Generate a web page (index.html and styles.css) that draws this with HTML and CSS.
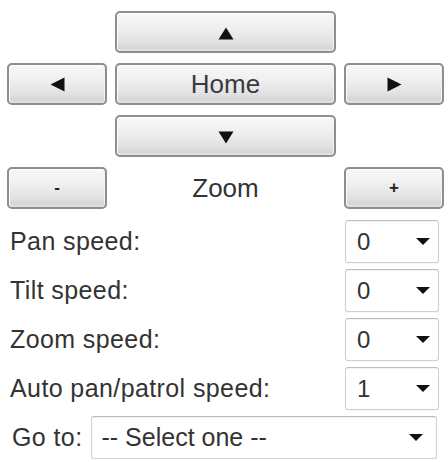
FILE: index.html
```html
<!DOCTYPE html>
<html lang="en">
<head>
<meta charset="utf-8">
<title>PTZ control</title>
<link rel="stylesheet" href="styles.css">
</head>
<body>
<div class="ptz">
  <div class="pad">
    <button class="btn up" type="button" aria-label="Up">
      <svg class="tri" width="16" height="13" viewBox="0 0 16 13"><path d="M8 0.5 L15.5 12.5 L0.5 12.5 Z"/></svg>
    </button>
    <button class="btn left" type="button" aria-label="Left">
      <svg class="tri" width="15" height="15" viewBox="0 0 15 15"><path d="M0.5 7.5 L14.5 0.5 L14.5 14.5 Z"/></svg>
    </button>
    <button class="btn home" type="button">Home</button>
    <button class="btn right" type="button" aria-label="Right">
      <svg class="tri" width="15" height="15" viewBox="0 0 15 15"><path d="M14.5 7.5 L0.5 0.5 L0.5 14.5 Z"/></svg>
    </button>
    <button class="btn down" type="button" aria-label="Down">
      <svg class="tri" width="16" height="13" viewBox="0 0 16 13"><path d="M8 12.5 L15.5 0.5 L0.5 0.5 Z"/></svg>
    </button>
    <button class="btn small minus" type="button">-</button>
    <span class="zoom-label">Zoom</span>
    <button class="btn small plus" type="button">+</button>
  </div>

  <div class="settings">
    <div class="row">
      <span class="label">Pan speed:</span>
      <div class="select short"><span class="value">0</span><svg class="caret" width="14" height="7" viewBox="0 0 14 7"><path d="M0 0 H14 L7 7 Z"/></svg></div>
    </div>
    <div class="row">
      <span class="label">Tilt speed:</span>
      <div class="select short"><span class="value">0</span><svg class="caret" width="14" height="7" viewBox="0 0 14 7"><path d="M0 0 H14 L7 7 Z"/></svg></div>
    </div>
    <div class="row">
      <span class="label">Zoom speed:</span>
      <div class="select short"><span class="value">0</span><svg class="caret" width="14" height="7" viewBox="0 0 14 7"><path d="M0 0 H14 L7 7 Z"/></svg></div>
    </div>
    <div class="row">
      <span class="label">Auto pan/patrol speed:</span>
      <div class="select short"><span class="value">1</span><svg class="caret" width="14" height="7" viewBox="0 0 14 7"><path d="M0 0 H14 L7 7 Z"/></svg></div>
    </div>
    <div class="row goto">
      <span class="label">Go to:</span>
      <div class="select wide"><span class="value">-- Select one --</span><svg class="caret" width="14" height="7" viewBox="0 0 14 7"><path d="M0 0 H14 L7 7 Z"/></svg></div>
    </div>
  </div>
</div>
</body>
</html>
```
FILE: styles.css
```css
html, body {
  margin: 0;
  padding: 0;
  background: #ffffff;
}

body {
  font-family: "Liberation Sans", Arial, sans-serif;
  color: #333333;
}

.ptz {
  width: 436px;
  padding: 11px 0 0 7px;
}

/* direction pad + zoom buttons */
.pad {
  display: grid;
  grid-template-columns: 100px 221px 100px;
  grid-auto-rows: 42px;
  column-gap: 8px;
  row-gap: 10px;
}

.btn {
  display: flex;
  align-items: center;
  justify-content: center;
  margin: 0;
  padding: 0;
  border: 2px solid #8e8e8e;
  border-radius: 5px;
  background: linear-gradient(#f8f8f8 0%, #efefef 40%, #e2e2e2 75%, #d6d6d6 92%, #e4e4e4 100%);
  box-shadow: inset 0 1px 0 #ffffff, inset 1px 0 0 #fbfbfb, inset -1px 0 0 #f2f2f2;
  font-family: inherit;
  font-size: 26px;
  color: #3a3a44;
  cursor: pointer;
}

.tri path {
  fill: #111111;
}

.up {
  grid-column: 2;
}

.up .tri,
.down .tri {
  margin-top: 2px;
}

.left {
  grid-column: 1;
}

.right {
  grid-column: 3;
}

.down {
  grid-column: 2;
}

.small {
  font-size: 17px;
  font-weight: bold;
  color: #222222;
}

.minus {
  grid-column: 1;
}

.plus {
  grid-column: 3;
}

.zoom-label {
  grid-column: 2;
  display: flex;
  align-items: center;
  justify-content: center;
  font-size: 26px;
  color: #333333;
  padding-top: 1px;
}

/* speed settings */
.settings {
  margin: 11px 4px 0 3px;
  display: flex;
  flex-direction: column;
  gap: 6px;
}

.row {
  display: flex;
  align-items: center;
  justify-content: space-between;
  height: 43px;
}

.label {
  font-size: 25px;
  color: #333333;
  letter-spacing: 0.4px;
}

.select {
  position: relative;
  box-sizing: border-box;
  height: 43px;
  display: flex;
  align-items: center;
  justify-content: space-between;
  border: 1px solid #cfcfcf;
  border-top-color: #bdbdbd;
  border-radius: 3px;
  background: #ffffff;
  box-shadow: inset 0 1px 1px rgba(0, 0, 0, 0.06), 0 1px 0 rgba(0, 0, 0, 0.03);
  padding: 0 8px 0 11px;
}

.select .value {
  font-size: 24px;
  color: #333333;
}

.caret path {
  fill: #111111;
}

.short {
  width: 94px;
}

.goto {
  justify-content: flex-start;
  gap: 8px;
  margin-left: 2px;
}

.wide {
  flex: 1;
  margin-right: 2px;
  padding-left: 10px;
  padding-right: 13px;
}

.wide .value {
  font-size: 25px;
}
```
